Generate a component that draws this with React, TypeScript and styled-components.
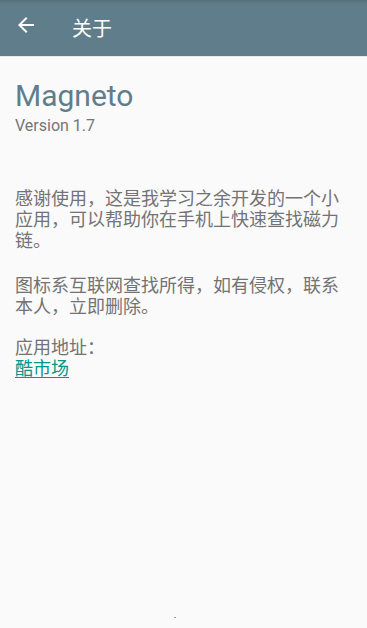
import React from 'react';
import styled, { createGlobalStyle } from 'styled-components';

const GlobalStyle = createGlobalStyle`
  html, body {
    margin: 0;
    padding: 0;
    background: #fafafa;
  }
  body {
    font-family: Roboto, "Noto Sans CJK SC", sans-serif;
  }
`;

// ページ全体
const Page = styled.div`
  display: flex;
  flex-direction: column;
  width: 367px;
  height: 628px;
  background: #fafafa;
  overflow: hidden;
`;

// ツールバー
const Toolbar = styled.header`
  display: flex;
  align-items: center;
  height: 57px;
  flex-shrink: 0;
  background: linear-gradient(rgba(0, 0, 0, 0.12), rgba(0, 0, 0, 0) 4px), #607d8b;
  border-bottom: 1px solid #e6e9ea;
  box-sizing: border-box;
`;

const BackButton = styled.div`
  display: flex;
  align-items: center;
  justify-content: center;
  width: 24px;
  height: 24px;
  margin-left: 14px;
  margin-top: -6px;
`;

const Title = styled.h1`
  margin: 2px 0 0 34px;
  font-size: 20px;
  font-weight: 400;
  color: #ffffff;
  line-height: 24px;
`;

// 本文
const Content = styled.main`
  display: flex;
  flex-direction: column;
  flex: 1;
  padding: 0 15px;
`;

const AppName = styled.div`
  margin-top: 21px;
  font-size: 30px;
  line-height: 35px;
  color: #607d8b;
`;

const Version = styled.div`
  margin-top: 3px;
  font-size: 16px;
  line-height: 19px;
  color: #757575;
`;

const Paragraph = styled.p<{ gap: number }>`
  margin: ${props => props.gap}px 0 0;
  font-size: 18px;
  line-height: 21px;
  color: #737373;
`;

const Link = styled.a`
  color: #009688;
  text-decoration: underline;
  text-underline-offset: 2px;
`;

const Footer = styled.div`
  display: flex;
  justify-content: center;
  margin-top: auto;
  padding-bottom: 10px;
`;

const Dot = styled.span`
  width: 2px;
  height: 1px;
  margin-left: -17px;
  background: #9e9e9e;
`;

const ArrowBack = () => (
  <svg width="24" height="24" viewBox="0 0 24 24" fill="#ffffff">
    <path d="M20 11H7.83l5.59-5.59L12 4l-8 8 8 8 1.41-1.41L7.83 13H20v-2z" />
  </svg>
);

const App = () => {
  return (
    <>
      <GlobalStyle />
      <Page>
        <Toolbar>
          <BackButton>
            <ArrowBack />
          </BackButton>
          <Title>关于</Title>
        </Toolbar>
        <Content>
          <AppName>Magneto</AppName>
          <Version>Version 1.7</Version>
          <Paragraph gap={53}>感谢使用，这是我学习之余开发的一个小应用，可以帮助你在手机上快速查找磁力链。</Paragraph>
          <Paragraph gap={24}>图标系互联网查找所得，如有侵权，联系本人，立即删除。</Paragraph>
          <Paragraph gap={20}>
            应用地址：
            <br />
            <Link href="#">酷市场</Link>
          </Paragraph>
          <Footer>
            <Dot />
          </Footer>
        </Content>
      </Page>
    </>
  );
};

export default App;
